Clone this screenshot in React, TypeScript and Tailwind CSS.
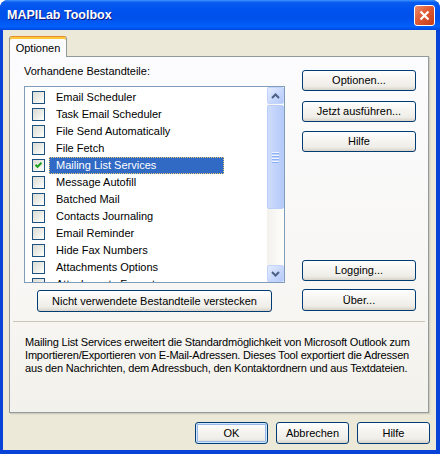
import React from "react";

const items = [
  "Email Scheduler",
  "Task Email Scheduler",
  "File Send Automatically",
  "File Fetch",
  "Mailing List Services",
  "Message Autofill",
  "Batched Mail",
  "Contacts Journaling",
  "Email Reminder",
  "Hide Fax Numbers",
  "Attachments Options",
  "Attachments Formats",
];

function XpButton({
  children,
  className = "",
  isDefault = false,
}: {
  children: React.ReactNode;
  className?: string;
  isDefault?: boolean;
}) {
  return (
    <button
      className={`flex items-center justify-center rounded-[3px] border border-[#003c74] bg-[linear-gradient(180deg,#ffffff_0%,#f7f6f2_35%,#eeede8_80%,#d8d3c8_100%)] text-[11px] leading-none text-black ${
        isDefault ? "shadow-[inset_0_0_0_1px_#cee7ff,inset_0_0_0_2px_#98b8ea]" : ""
      } ${className}`}
    >
      {children}
    </button>
  );
}

function CheckBox({ checked }: { checked?: boolean }) {
  return (
    <span className="flex h-[13px] w-[13px] shrink-0 items-center justify-center border border-[#1c5180] bg-[linear-gradient(135deg,#dcdcd7_0%,#eeeee9_55%,#ffffff_100%)]">
      {checked && (
        <svg width="7" height="7" viewBox="0 0 7 7">
          <polyline points="0.5,2.8 2.5,4.8 6.5,0.8" fill="none" stroke="#21a121" strokeWidth="2" />
        </svg>
      )}
    </span>
  );
}

function Arrow({ down }: { down?: boolean }) {
  return (
    <span className="flex h-[17px] w-[17px] items-center justify-center rounded-[2px] border border-[#c3d3fd] bg-[linear-gradient(135deg,#e3ebff_0%,#c6d6fc_60%,#b5c9f8_100%)]">
      <svg width="9" height="6" viewBox="0 0 9 6">
        <polyline
          points={down ? "1,1 4.5,4.5 8,1" : "1,5 4.5,1.5 8,5"}
          fill="none"
          stroke="#4d6185"
          strokeWidth="2"
        />
      </svg>
    </span>
  );
}

function ListBox() {
  return (
    <div className="flex h-[197px] w-[261px] border border-[#7f9db9] bg-white">
      <div className="flex-1 overflow-hidden pt-[2px]">
        {items.map((name, i) => {
          const selected = i === 4;
          return (
            <div key={name} className="flex h-[17px] items-center pl-[7px]">
              <CheckBox checked={selected} />
              <div
                className={`ml-[4px] flex h-[17px] w-[175px] items-center pl-[7px] leading-none ${
                  selected ? "bg-[#316ac5] text-white outline-1 outline-dotted outline-offset-[-1px] outline-[#e8c870]" : ""
                }`}
              >
                {name}
              </div>
            </div>
          );
        })}
      </div>
      <div className="flex w-[17px] flex-col bg-[linear-gradient(90deg,#f3f1ec,#fefefb)]">
        <Arrow />
        <div className="mt-[1px] flex h-[104px] items-center justify-center rounded-[2px] border border-[#b9cdf9] bg-[linear-gradient(90deg,#cfdcfd_0%,#c1d3fb_50%,#b6cafa_100%)]">
          <div className="flex flex-col gap-[1px]">
            <span className="h-[1px] w-[7px] bg-[#eef4fe] shadow-[0_1px_0_#8cb0f8]" />
            <span className="mt-[1px] h-[1px] w-[7px] bg-[#eef4fe] shadow-[0_1px_0_#8cb0f8]" />
            <span className="mt-[1px] h-[1px] w-[7px] bg-[#eef4fe] shadow-[0_1px_0_#8cb0f8]" />
            <span className="mt-[1px] h-[1px] w-[7px] bg-[#eef4fe] shadow-[0_1px_0_#8cb0f8]" />
          </div>
        </div>
        <div className="flex-1" />
        <Arrow down />
      </div>
    </div>
  );
}

export default function App() {
  return (
    <div className="h-[454px] w-[440px] bg-white font-['Liberation_Sans',Arial,sans-serif] text-[11px] text-black">
      <div className="flex h-full flex-col rounded-t-[8px] bg-[#0842d6]">
        {/* title bar */}
        <div className="flex h-[30px] shrink-0 items-center justify-between rounded-t-[8px] bg-[linear-gradient(180deg,#3d95ff_0%,#0a5cf0_8%,#0053ee_30%,#0050ea_60%,#0060fb_88%,#0048e0_100%)] pl-[7px] pr-[5px]">
          <span className="pt-[1px] text-[12.5px] font-bold text-white [text-shadow:1px_1px_0_#0a1883]">MAPILab Toolbox</span>
          <span className="flex h-[21px] w-[21px] items-center justify-center rounded-[3px] border border-white bg-[linear-gradient(135deg,#ec8b6e_0%,#e05a33_45%,#c63d18_100%)]">
            <svg width="11" height="11" viewBox="0 0 11 11">
              <path d="M1.5 1.5 L9.5 9.5 M9.5 1.5 L1.5 9.5" stroke="white" strokeWidth="2.2" />
            </svg>
          </span>
        </div>

        {/* body */}
        <div className="mb-[4px] ml-[3px] mr-[4px] flex flex-1 flex-col bg-[#ece9d8] px-[6px] pt-[6px]">
          <div className="relative z-10 -mb-[1px] flex h-[21px] w-[58px] items-center justify-center rounded-t-[3px] border-x border-t border-x-[#919b9c] border-t-[#e68b2c] bg-[#fcfcfe] pt-[2px] shadow-[inset_0_2px_0_#ffc83c]">
            Optionen
          </div>

          <div className="flex h-[357px] w-[420px] flex-col border border-[#919b9c] bg-[linear-gradient(180deg,#fcfcfe_0%,#f7f6f3_70%,#f3f1eb_100%)] shadow-[1px_1px_0_#d0cebf,2px_2px_0_#e3e0d0]">
            <div className="flex h-[264px]">
              <div className="ml-[14px] flex w-[261px] flex-col">
                <div className="mt-[8px] h-[13px] leading-[13px]">Vorhandene Bestandteile:</div>
                <div className="mt-[8px]">
                  <ListBox />
                </div>
                <XpButton className="mx-auto mt-[7px] h-[22px] w-[235px]">
                  Nicht verwendete Bestandteile verstecken
                </XpButton>
              </div>
              <div className="ml-[17px] flex w-[114px] flex-col">
                <XpButton className="mt-[13px] h-[21px] w-full">Optionen...</XpButton>
                <XpButton className="mt-[10px] h-[21px] w-full">Jetzt ausführen...</XpButton>
                <XpButton className="mt-[9px] h-[21px] w-full">Hilfe</XpButton>
                <XpButton className="mt-auto h-[21px] w-full">Logging...</XpButton>
                <XpButton className="mb-[10px] mt-[8px] h-[22px] w-full">Über...</XpButton>
              </div>
            </div>
            <div className="mx-[3px] h-[1px] bg-[#c9c6b8]" />
            <div className="mt-[14px] pl-[15px] leading-[13px] tracking-[-0.18px] whitespace-nowrap">
              Mailing List Services erweitert die Standardmöglichkeit von Microsoft Outlook zum
              <br />
              Importieren/Exportieren von E-Mail-Adressen. Dieses Tool exportiert die Adressen
              <br />
              aus den Nachrichten, dem Adressbuch, den Kontaktordnern und aus Textdateien.
            </div>
          </div>

          <div className="mt-[9px] flex justify-end gap-[8px]">
            <XpButton isDefault className="h-[22px] w-[73px]">OK</XpButton>
            <XpButton className="h-[22px] w-[73px]">Abbrechen</XpButton>
            <XpButton className="h-[22px] w-[73px]">Hilfe</XpButton>
          </div>
        </div>
      </div>
    </div>
  );
}
